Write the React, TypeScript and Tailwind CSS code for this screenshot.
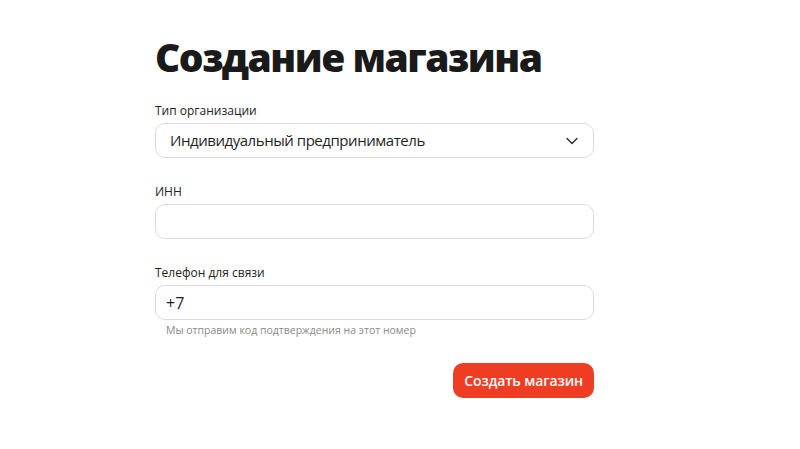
import { ChevronDown } from "lucide-react"

function Field({ label, children }: { label: string; children: React.ReactNode }) {
  return (
    <div className="flex flex-col gap-[4px]">
      <label className="text-[12px] leading-[16px] text-[#222]">{label}</label>
      {children}
    </div>
  )
}

export default function App() {
  return (
    <div className="w-[800px] h-[449px] bg-white" style={{ fontFamily: '"Open Sans", sans-serif' }}>
      <div className="ml-[155px] w-[439px] pt-[32px]">
        <h1 className="text-[39px] leading-[50px] font-extrabold tracking-[-1.5px] text-[#1a1a1a]">Создание магазина</h1>
        <div className="mt-[21px] flex flex-col gap-[26px]">
          <Field label="Тип организации">
            <div className="h-[35px] rounded-[10px] border border-[#dcdcdc] pl-[14px] pr-[11px] flex items-center justify-between">
              <span className="text-[15px] tracking-[-0.45px] text-[#1f1f1f]">Индивидуальный предприниматель</span>
              <ChevronDown className="w-[20px] h-[20px] text-[#333]" strokeWidth={1.8} />
            </div>
          </Field>
          <Field label="ИНН">
            <div className="h-[35px] rounded-[10px] border border-[#dcdcdc]" />
          </Field>
          <div>
            <Field label="Телефон для связи">
              <div className="h-[35px] rounded-[10px] border border-[#dcdcdc] px-[10px] flex items-center">
                <span className="text-[16px] text-[#1f1f1f]">+7</span>
              </div>
            </Field>
            <p className="mt-[2px] ml-[11px] text-[10.5px] leading-[16px] text-[#8a8a8a]">Мы отправим код подтверждения на этот номер</p>
          </div>
        </div>
        <div className="mt-[25px] flex justify-end">
          <button className="h-[35px] px-[11px] rounded-[10px] bg-[#ef3d24] text-white text-[14px] font-semibold tracking-[-0.1px]">Создать магазин</button>
        </div>
      </div>
    </div>
  )
}
